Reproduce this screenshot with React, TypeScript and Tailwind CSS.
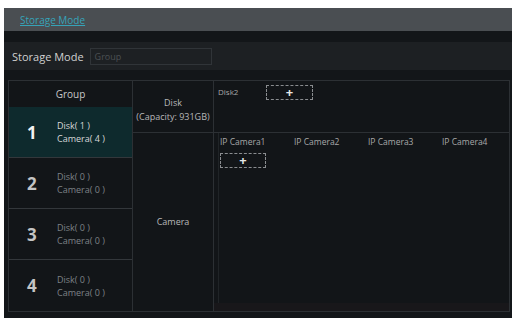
import React from 'react'

const groups = [
  { n: 1, disk: 1, cam: 4, active: true },
  { n: 2, disk: 0, cam: 0, active: false },
  { n: 3, disk: 0, cam: 0, active: false },
  { n: 4, disk: 0, cam: 0, active: false },
]

function AddBox({ className }: { className?: string }) {
  return (
    <div
      className={
        'shrink-0 flex items-center justify-center border border-dashed border-[#8a8d90] text-[#e8e8e8] text-[13px] font-bold leading-none ' +
        (className ?? '')
      }
    >
      +
    </div>
  )
}

export default function App() {
  return (
    <div
      className="w-[515px] h-[318px] bg-white pt-[8px] pl-[4px] pr-[3px] overflow-hidden"
      style={{ fontFamily: '"Open Sans", "Liberation Sans", sans-serif' }}
    >
      <div className="h-full bg-[#131619] flex flex-col">
        {/* title bar */}
        <div className="h-[23px] bg-[#4a4e52] flex items-center pl-[16px]">
          <span className="text-[10px] text-[#36a3b8] underline leading-none">Storage Mode</span>
        </div>

        {/* storage mode row */}
        <div className="mt-[11px] h-[28px] bg-[#1d2023] flex items-center pl-[8px]">
          <span className="text-[11px] text-[#d0d0d0] leading-none">Storage Mode</span>
          <div className="ml-[6px] w-[122px] h-[17px] border border-[#303438] flex items-center pl-[4px]">
            <span className="text-[9px] text-[#4c5054] leading-none">Group</span>
          </div>
        </div>

        {/* table */}
        <div className="mt-[10px] ml-[4px] mr-[2px] h-[232px] flex border border-[#2c3034] bg-[#121518]">
          {/* group column */}
          <div className="w-[124px] shrink-0 flex flex-col border-r border-[#2c3034]">
            <div className="h-[26px] flex items-center justify-center text-[10px] text-[#c8c8c8]">Group</div>
            {groups.map((g, i) => (
              <div
                key={g.n}
                className={
                  'flex items-center pl-[18px] ' +
                  (i < 3 ? 'h-[51px] border-b border-[#33373b] ' : 'flex-1 ') +
                  (g.active ? 'bg-[#0e2a2d]' : '')
                }
              >
                <span
                  className={
                    'w-[24px] text-[17px] font-bold leading-none ' +
                    (g.active ? 'text-[#f2f2f2]' : 'text-[#c4c4c4]')
                  }
                >
                  {g.n}
                </span>
                <div
                  className={
                    'ml-[6px] flex flex-col text-[9px] leading-[13px] ' +
                    (g.active ? 'text-[#d8d8d8]' : 'text-[#7e8286]')
                  }
                >
                  <span>Disk( {g.disk} )</span>
                  <span>Camera( {g.cam} )</span>
                </div>
              </div>
            ))}
          </div>

          {/* disk / camera */}
          <div className="flex-1 min-w-0 flex flex-col">
            <div className="h-[52px] flex border-b border-[#2c3034]">
              <div className="w-[81px] shrink-0 border-r border-[#2c3034] flex flex-col items-center justify-center pt-[6px] text-[9px] leading-[14px] text-[#b8b8b8]">
                <span>Disk</span>
                <span className="whitespace-nowrap">(Capacity: 931GB)</span>
              </div>
              <div className="flex-1 flex items-start pl-[4px] pt-[4px]">
                <span className="text-[8px] text-[#a8a8a8] leading-none mt-[3px] w-[48px]">Disk2</span>
                <AddBox className="w-[47px] h-[15px]" />
              </div>
            </div>
            <div className="flex-1 flex">
              <div className="w-[81px] shrink-0 border-r border-[#2c3034] flex items-center justify-center text-[9px] text-[#b8b8b8]">
                Camera
              </div>
              <div className="flex-1 min-w-0 flex flex-col">
                <div className="flex-1 ml-[4px] border-l border-[#202427] flex flex-col pt-[5px] pl-[1px]">
                  <div className="flex text-[8.5px] text-[#a8a8a8] leading-none whitespace-nowrap">
                    {['IP Camera1', 'IP Camera2', 'IP Camera3', 'IP Camera4'].map((c) => (
                      <span key={c} className="w-[74px] shrink-0">{c}</span>
                    ))}
                  </div>
                  <AddBox className="mt-[6px] w-[46px] h-[15px]" />
                </div>
                <div className="h-[8px] bg-[#18171a]" />
              </div>
            </div>
          </div>
        </div>
      </div>
    </div>
  )
}
